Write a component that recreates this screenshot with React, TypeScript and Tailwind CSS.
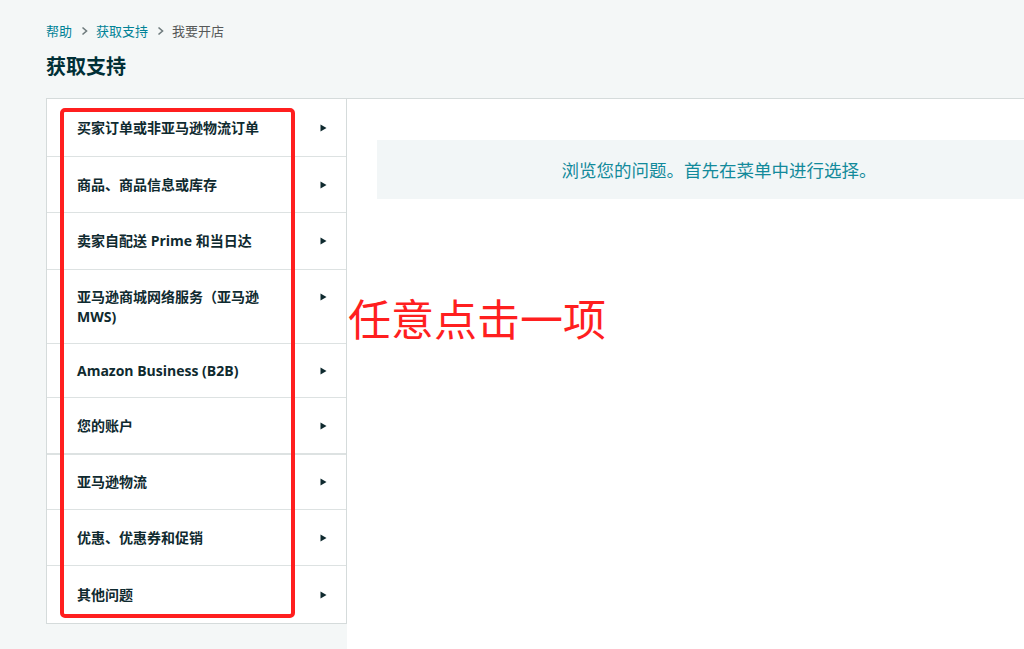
import React from "react";

const rows: { label: string; h: number; thick?: boolean }[] = [
  { label: "买家订单或非亚马逊物流订单", h: 58 },
  { label: "商品、商品信息或库存", h: 56 },
  { label: "卖家自配送 Prime 和当日达", h: 57 },
  { label: "亚马逊商城网络服务（亚马逊 MWS)", h: 74 },
  { label: "Amazon Business (B2B)", h: 54 },
  { label: "您的账户", h: 57, thick: true },
  { label: "亚马逊物流", h: 55 },
  { label: "优惠、优惠券和促销", h: 56 },
  { label: "其他问题", h: 57 },
];

function Chevron() {
  return (
    <svg width="7" height="10" viewBox="0 0 7 10" className="shrink-0">
      <polyline points="1.5,1.5 5.5,5 1.5,8.5" fill="none" stroke="#6f7b7d" strokeWidth="1.6" />
    </svg>
  );
}

function Arrow() {
  return (
    <svg width="7" height="8" viewBox="0 0 7 8">
      <path d="M0.5 0.5 L6.5 4 L0.5 7.5 Z" fill="#0f2a2f" />
    </svg>
  );
}

export default function App() {
  const font = { fontFamily: '"Open Sans", "Noto Sans CJK SC", sans-serif' };
  return (
    <div
      className="relative flex h-[649px] w-[1024px] flex-col overflow-hidden bg-[#f4f7f7]"
      style={font}
    >
      <div className="pl-[46px] pt-[22px]">
        <div className="flex h-[18px] items-center text-[13px] leading-[18px]">
          <span className="text-[#008296]">帮助</span>
          <span className="ml-[9px] mr-[8px] flex items-center">
            <Chevron />
          </span>
          <span className="text-[#008296]">获取支持</span>
          <span className="ml-[9px] mr-[8px] flex items-center">
            <Chevron />
          </span>
          <span className="text-[#565959]">我要开店</span>
        </div>
        <h1 className="mt-[13px] h-[28px] text-[20px] font-bold leading-[28px] text-[#002f36]">
          获取支持
        </h1>
      </div>

      <div className="mt-[17px] ml-[46px] flex flex-1 border-t border-[#d5dbdb]">
        <div className="w-[301px] shrink-0 self-start border-x border-b border-[#d5dbdb] bg-white">
          {rows.map((r, i) => (
            <div
              key={i}
              className={`flex items-center pl-[30px] pr-[19px] ${
                i === rows.length - 1
                  ? ""
                  : r.thick
                  ? "border-b-2 border-[#dde2e2]"
                  : "border-b border-[#dde2e2]"
              }`}
              style={{ height: r.h }}
            >
              <div className="flex w-full items-start justify-between">
                <span className="max-w-[200px] text-[14px] font-bold leading-[20px] text-[#0f2a2f]">
                  {r.label}
                </span>
                <span className="flex h-[20px] items-center">
                  <Arrow />
                </span>
              </div>
            </div>
          ))}
        </div>
        <div className="flex-1 overflow-hidden bg-white pl-[30px] pt-[41px]">
          <div className="flex h-[59px] w-[684px] items-center justify-center bg-[#f2f6f7]">
            <span className="text-[17.5px] leading-[24px] text-[#138a9b]">
              浏览您的问题。首先在菜单中进行选择。
            </span>
          </div>
        </div>
      </div>

      {/* annotation overlay */}
      <div className="pointer-events-none absolute left-[60px] top-[108px] h-[510px] w-[235px] rounded-[5px] border-[4px] border-[#ff1f1f]" />
      <div
        className="pointer-events-none absolute left-[348px] top-[290px] text-[43px] leading-[54px] text-[#ff1f1f]"
        style={{ fontFamily: '"Noto Sans CJK SC", sans-serif' }}
      >
        任意点击一项
      </div>
    </div>
  );
}
